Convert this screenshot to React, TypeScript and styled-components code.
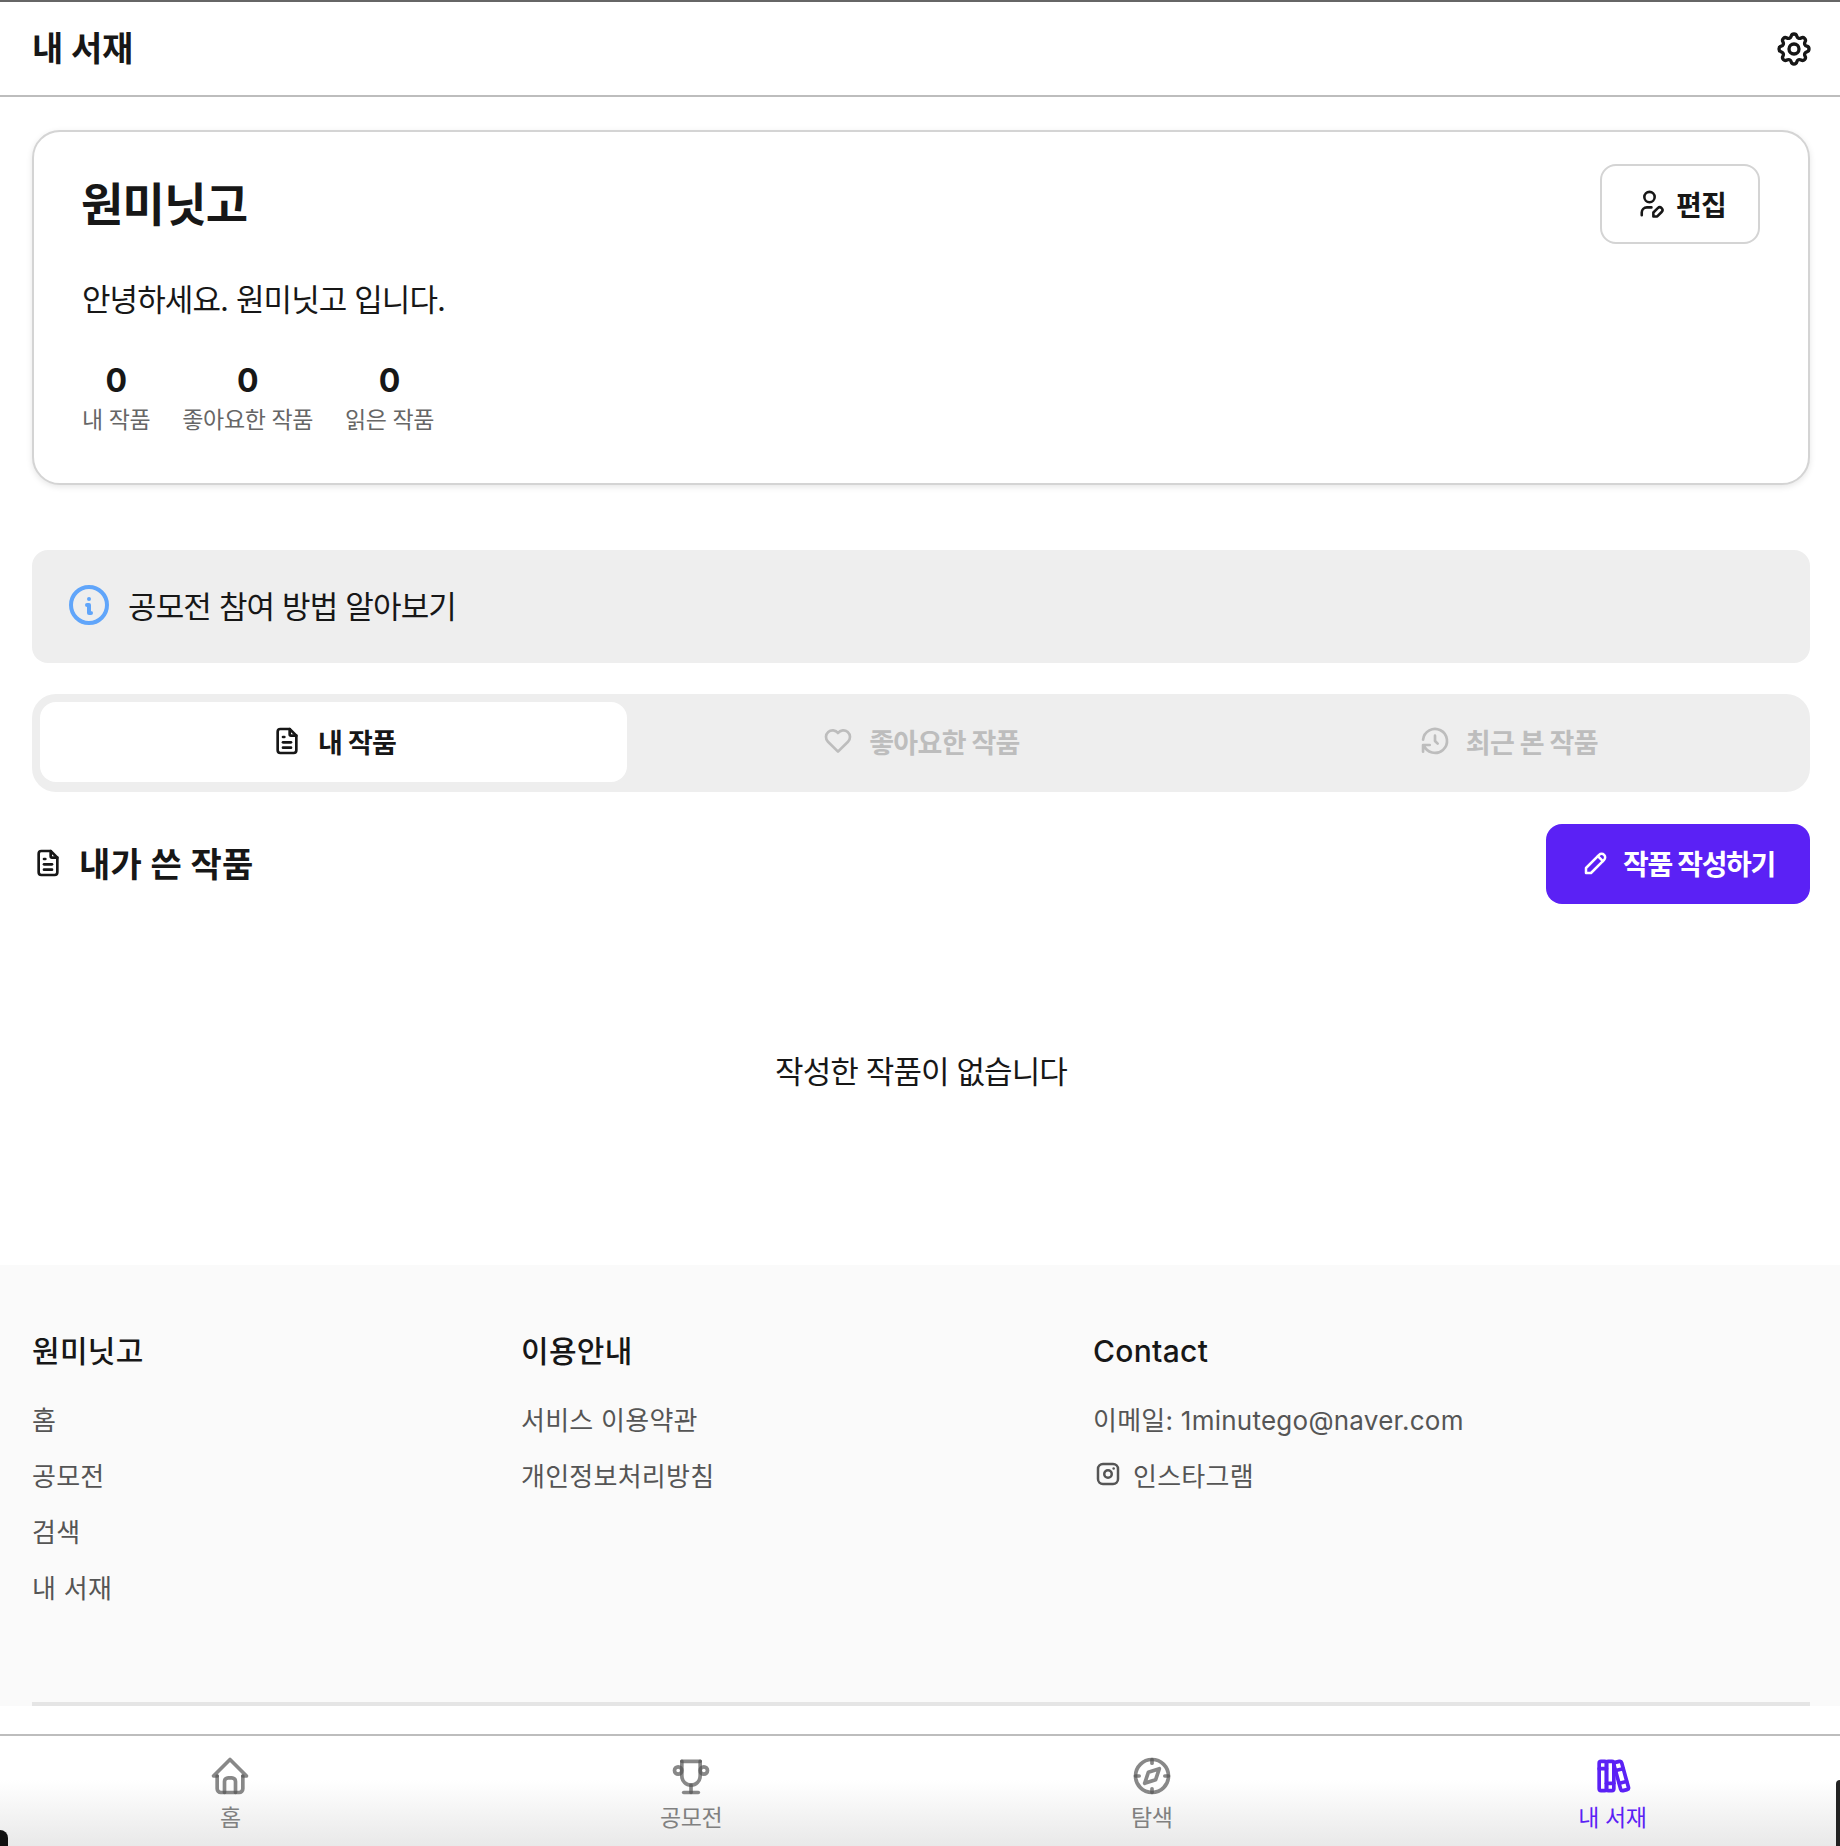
import React from 'react'
import styled, { createGlobalStyle } from 'styled-components'
import {
  TbBooks,
  TbBrandInstagram,
  TbCompass,
  TbFileText,
  TbHeart,
  TbHistory,
  TbHome,
  TbInfoCircle,
  TbPencil,
  TbSettings,
  TbTrophy,
  TbUserEdit,
} from 'react-icons/tb'

const GlobalStyle = createGlobalStyle`
  * { box-sizing: border-box; }
  html, body { margin: 0; padding: 0; background: #fff; }
  body {
    font-family: Inter, "Noto Sans CJK KR", "Noto Sans", sans-serif;
    color: #171717;
  }
`

const stats = [
  { value: 0, label: '내 작품' },
  { value: 0, label: '좋아요한 작품' },
  { value: 0, label: '읽은 작품' },
]

const tabs = [
  { label: '내 작품', icon: TbFileText, active: true },
  { label: '좋아요한 작품', icon: TbHeart, active: false },
  { label: '최근 본 작품', icon: TbHistory, active: false },
]

const navItems = [
  { label: '홈', icon: TbHome, active: false },
  { label: '공모전', icon: TbTrophy, active: false },
  { label: '탐색', icon: TbCompass, active: false },
  { label: '내 서재', icon: TbBooks, active: true },
]

const App = () => {
  return (
    <Screen>
      <GlobalStyle />
      <Header>
        <PageTitle>내 서재</PageTitle>
        <TbSettings size={40} strokeWidth={2} />
      </Header>

      <Scroll>
        <Content>
          <ProfileCard>
            <ProfileTop>
              <ProfileName>원미닛고</ProfileName>
              <EditButton>
                <TbUserEdit size={31} strokeWidth={2} />
                편집
              </EditButton>
            </ProfileTop>
            <Bio>안녕하세요. 원미닛고 입니다.</Bio>
            <Stats>
              {stats.map((s) => (
                <Stat key={s.label}>
                  <StatValue>{s.value}</StatValue>
                  <StatLabel>{s.label}</StatLabel>
                </Stat>
              ))}
            </Stats>
          </ProfileCard>

          <InfoBanner>
            <TbInfoCircle size={48} color="#60a5fa" strokeWidth={2} />
            <InfoText>공모전 참여 방법 알아보기</InfoText>
          </InfoBanner>

          <TabBar>
            {tabs.map((t) => (
              <Tab key={t.label} $active={t.active}>
                <t.icon size={32} strokeWidth={2} />
                {t.label}
              </Tab>
            ))}
          </TabBar>

          <SectionHead>
            <SectionTitle>
              <TbFileText size={32} strokeWidth={2} />
              내가 쓴 작품
            </SectionTitle>
            <WriteButton>
              <TbPencil size={30} strokeWidth={2} />
              작품 작성하기
            </WriteButton>
          </SectionHead>

          <Empty>작성한 작품이 없습니다</Empty>
        </Content>

        <Footer>
          <FooterCols>
            <FooterCol>
              <FooterHeading>원미닛고</FooterHeading>
              <FooterLink>홈</FooterLink>
              <FooterLink>공모전</FooterLink>
              <FooterLink>검색</FooterLink>
              <FooterLink>내 서재</FooterLink>
            </FooterCol>
            <FooterCol>
              <FooterHeading>이용안내</FooterHeading>
              <FooterLink>서비스 이용약관</FooterLink>
              <FooterLink>개인정보처리방침</FooterLink>
            </FooterCol>
            <FooterCol>
              <FooterHeading>Contact</FooterHeading>
              <FooterLink>이메일: 1minutego@naver.com</FooterLink>
              <FooterLink>
                <TbBrandInstagram size={30} strokeWidth={2} />
                인스타그램
              </FooterLink>
            </FooterCol>
          </FooterCols>
          <FooterRule />
        </Footer>
      </Scroll>

      <BottomNav>
        {navItems.map((n) => (
          <NavItem key={n.label} $active={n.active}>
            <n.icon size={44} strokeWidth={2} />
            <span>{n.label}</span>
          </NavItem>
        ))}
        <CornerLeft />
        <CornerRight />
      </BottomNav>
    </Screen>
  )
}

const Screen = styled.div`
  height: 1846px;
  display: flex;
  flex-direction: column;
  overflow: hidden;
  border-top: 2px solid #666;
`

const Header = styled.header`
  flex: none;
  height: 95px;
  padding: 0 26px 0 32px;
  display: flex;
  align-items: center;
  justify-content: space-between;
  background: #fff;
  border-bottom: 2px solid #bdbdbd;
`

const PageTitle = styled.h1`
  margin: 0 0 4px;
  font-size: 34px;
  font-weight: 700;
  letter-spacing: -0.2px;
`

const Scroll = styled.div`
  flex: 1;
  min-height: 0;
  overflow: hidden;
`

const Content = styled.main`
  height: 1168px;
  padding: 33px 30px 0 32px;
`

const ProfileCard = styled.section`
  height: 355px;
  padding: 32px 48px 0 47px;
  background: #fff;
  border: 2px solid #d4d4d4;
  border-radius: 28px;
  box-shadow: 0 2px 6px rgba(0, 0, 0, 0.1);
`

const ProfileTop = styled.div`
  display: flex;
  align-items: center;
  justify-content: space-between;
`

const ProfileName = styled.h2`
  margin: 0 0 6px;
  font-size: 46px;
  font-weight: 700;
  letter-spacing: -0.7px;
`

const EditButton = styled.button`
  width: 160px;
  height: 80px;
  display: flex;
  align-items: center;
  justify-content: center;
  gap: 11px;
  padding-bottom: 2px;
  font: inherit;
  font-size: 28px;
  font-weight: 700;
  letter-spacing: -0.8px;
  color: #171717;
  background: #fff;
  border: 2px solid #d4d4d4;
  border-radius: 16px;
`

const Bio = styled.p`
  margin: 34px 0 0 1px;
  font-size: 31px;
  line-height: 44px;
  letter-spacing: -0.9px;
`

const Stats = styled.div`
  display: flex;
  gap: 32px;
  margin: 39px 0 0 1px;
`

const Stat = styled.div`
  display: flex;
  flex-direction: column;
  align-items: center;
`

const StatValue = styled.div`
  font-size: 32px;
  line-height: 40px;
  font-weight: 700;
`

const StatLabel = styled.div`
  margin-top: 1px;
  font-size: 23px;
  line-height: 36px;
  letter-spacing: -0.4px;
  color: #666;
`

const InfoBanner = styled.div`
  height: 113px;
  margin-top: 65px;
  padding: 0 33px 3px;
  display: flex;
  align-items: center;
  gap: 15px;
  background: #eee;
  border-radius: 16px;
`

const InfoText = styled.span`
  margin-bottom: 2px;
  font-size: 31px;
  letter-spacing: -0.85px;
`

const TabBar = styled.div`
  height: 98px;
  margin-top: 31px;
  padding: 8px 8px 10px;
  display: grid;
  grid-template-columns: repeat(3, 1fr);
  background: #eee;
  border-radius: 24px;
`

const Tab = styled.div<{ $active: boolean }>`
  display: flex;
  align-items: center;
  justify-content: center;
  gap: 15px;
  padding-bottom: 2px;
  font-size: 27px;
  font-weight: 700;
  letter-spacing: -0.7px;
  border-radius: 16px;
  color: ${(p) => (p.$active ? '#171717' : '#bdbdbd')};
  background: ${(p) => (p.$active ? '#fff' : 'transparent')};
`

const SectionHead = styled.div`
  margin-top: 32px;
  display: flex;
  align-items: center;
  justify-content: space-between;
`

const SectionTitle = styled.h3`
  margin: 0 0 3px;
  display: flex;
  align-items: center;
  gap: 15px;
  font-size: 34px;
  font-weight: 700;
  letter-spacing: 0.3px;
`

const WriteButton = styled.button`
  width: 264px;
  height: 80px;
  display: flex;
  align-items: center;
  justify-content: center;
  gap: 12px;
  padding-bottom: 4px;
  font: inherit;
  font-size: 28px;
  font-weight: 700;
  letter-spacing: -1.3px;
  color: #fff;
  background: #5b21f5;
  border: 0;
  border-radius: 16px;
`

const Empty = styled.p`
  margin: 146px 0 0;
  text-align: center;
  font-size: 31px;
  line-height: 44px;
  letter-spacing: -0.9px;
`

const Footer = styled.footer`
  padding: 64px 30px 0 32px;
  background: #fafafa;
`

const FooterCols = styled.div`
  height: 373px;
  display: grid;
  grid-template-columns: 489px 572px 1fr;
`

const FooterCol = styled.div`
  display: flex;
  flex-direction: column;
  align-items: flex-start;
`

const FooterHeading = styled.h4`
  margin: 0 0 17px;
  font-size: 30px;
  line-height: 44px;
  font-weight: 500;
  letter-spacing: 0.3px;
`

const FooterLink = styled.div`
  height: 56px;
  display: flex;
  align-items: center;
  gap: 10px;
  font-size: 26px;
  letter-spacing: 0.25px;
  color: #555;
`

const FooterRule = styled.div`
  height: 4px;
  background: #e5e5e5;
`

const BottomNav = styled.nav`
  flex: none;
  position: relative;
  height: 112px;
  padding-top: 18px;
  display: grid;
  grid-template-columns: repeat(4, 460.7px);
  align-items: start;
  border-top: 2px solid #bdbdbd;
  background: linear-gradient(#fff 40%, #e9e9e9);
`

const NavItem = styled.div<{ $active: boolean }>`
  display: flex;
  flex-direction: column;
  align-items: center;
  gap: 2px;
  font-size: 23px;
  line-height: 36px;
  letter-spacing: -0.4px;
  color: ${(p) => (p.$active ? '#5b21f5' : '#808080')};

  svg {
    stroke-opacity: ${(p) => (p.$active ? 1 : 0.7)};
    stroke: ${(p) => (p.$active ? '#5b21f5' : '#555')};
  }
`

const CornerLeft = styled.div`
  position: absolute;
  left: 0;
  bottom: 0;
  width: 8px;
  height: 16px;
  background: #111;
  border-top-right-radius: 8px;
`

const CornerRight = styled.div`
  position: absolute;
  right: 0;
  bottom: 0;
  width: 4px;
  height: 66px;
  background: #222;
  border-top-left-radius: 4px;
`

export default App
